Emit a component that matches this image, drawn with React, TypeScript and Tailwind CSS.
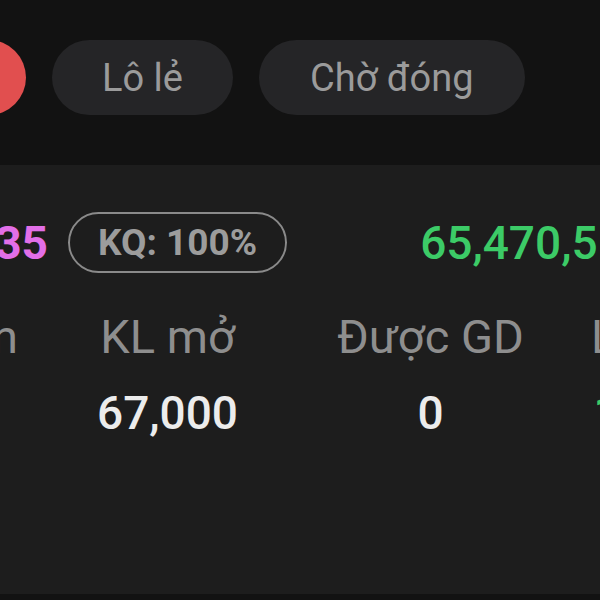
import React from "react";

const columns = [
  { label: "Giá vốn", value: "23.150", tone: "text-[#ececec]" },
  { label: "KL mở", value: "67,000", tone: "text-[#ececec]" },
  { label: "Được GD", value: "0", tone: "text-[#ececec]" },
  { label: "Lãi/lỗ", value: "1,200", tone: "text-[#3ccb67]" },
];

export default function App() {
  return (
    <div
      className="w-[600px] h-[600px] overflow-hidden bg-[#121212] flex flex-col"
      style={{ fontFamily: "Roboto, 'Noto Sans', sans-serif" }}
    >
      {/* filter chips */}
      <div className="h-[165px] shrink-0 pt-[40px] flex items-start gap-[26px] whitespace-nowrap">
        <div className="w-[207px] -ml-[181px] h-[75px] shrink-0 rounded-full bg-[#e14f4f] flex items-center justify-center text-[38px] text-white">
          Tất cả
        </div>
        <div className="h-[75px] shrink-0 rounded-full bg-[#252527] px-[50px] flex items-center text-[38px] leading-none text-[#9b9b9b]">
          Lô lẻ
        </div>
        <div className="h-[75px] shrink-0 rounded-full bg-[#252527] px-[51px] flex items-center text-[38px] leading-none text-[#9b9b9b]">
          Chờ đóng
        </div>
      </div>

      {/* position panel */}
      <div className="h-[429px] shrink-0 bg-[#1d1d1d] pt-[47px]">
        <div className="flex items-center whitespace-nowrap h-[61px]">
          <div className="w-[150px] -ml-[102px] shrink-0 text-right text-[46px] font-bold leading-none text-[#e26fe8]">
            27.35
          </div>
          <div className="ml-[20px] h-[61px] shrink-0 rounded-full border-[2.5px] border-[#8a8a8a] px-[28px] flex items-center text-[37px] font-bold leading-none text-[#9c9c9c]">
            KQ: 100%
          </div>
          <div className="ml-[133px] shrink-0 text-[46px] font-medium leading-none text-[#3ccb67]">
            65,470,5
          </div>
        </div>

        <div className="mt-[37px] -ml-[156px] grid grid-cols-[192px_263px_263px_178px] whitespace-nowrap">
          {columns.map((c) => (
            <div key={c.label} className="text-center text-[47px] leading-[54px] text-[#8e8e8e]">
              {c.label}
            </div>
          ))}
          {columns.map((c, idx) => (
            <div
              key={idx}
              className={`mt-[22px] text-center text-[46px] font-medium leading-[54px] ${c.tone}`}
            >
              {idx === 0 ? "" : c.value}
            </div>
          ))}
        </div>
      </div>
    </div>
  );
}
